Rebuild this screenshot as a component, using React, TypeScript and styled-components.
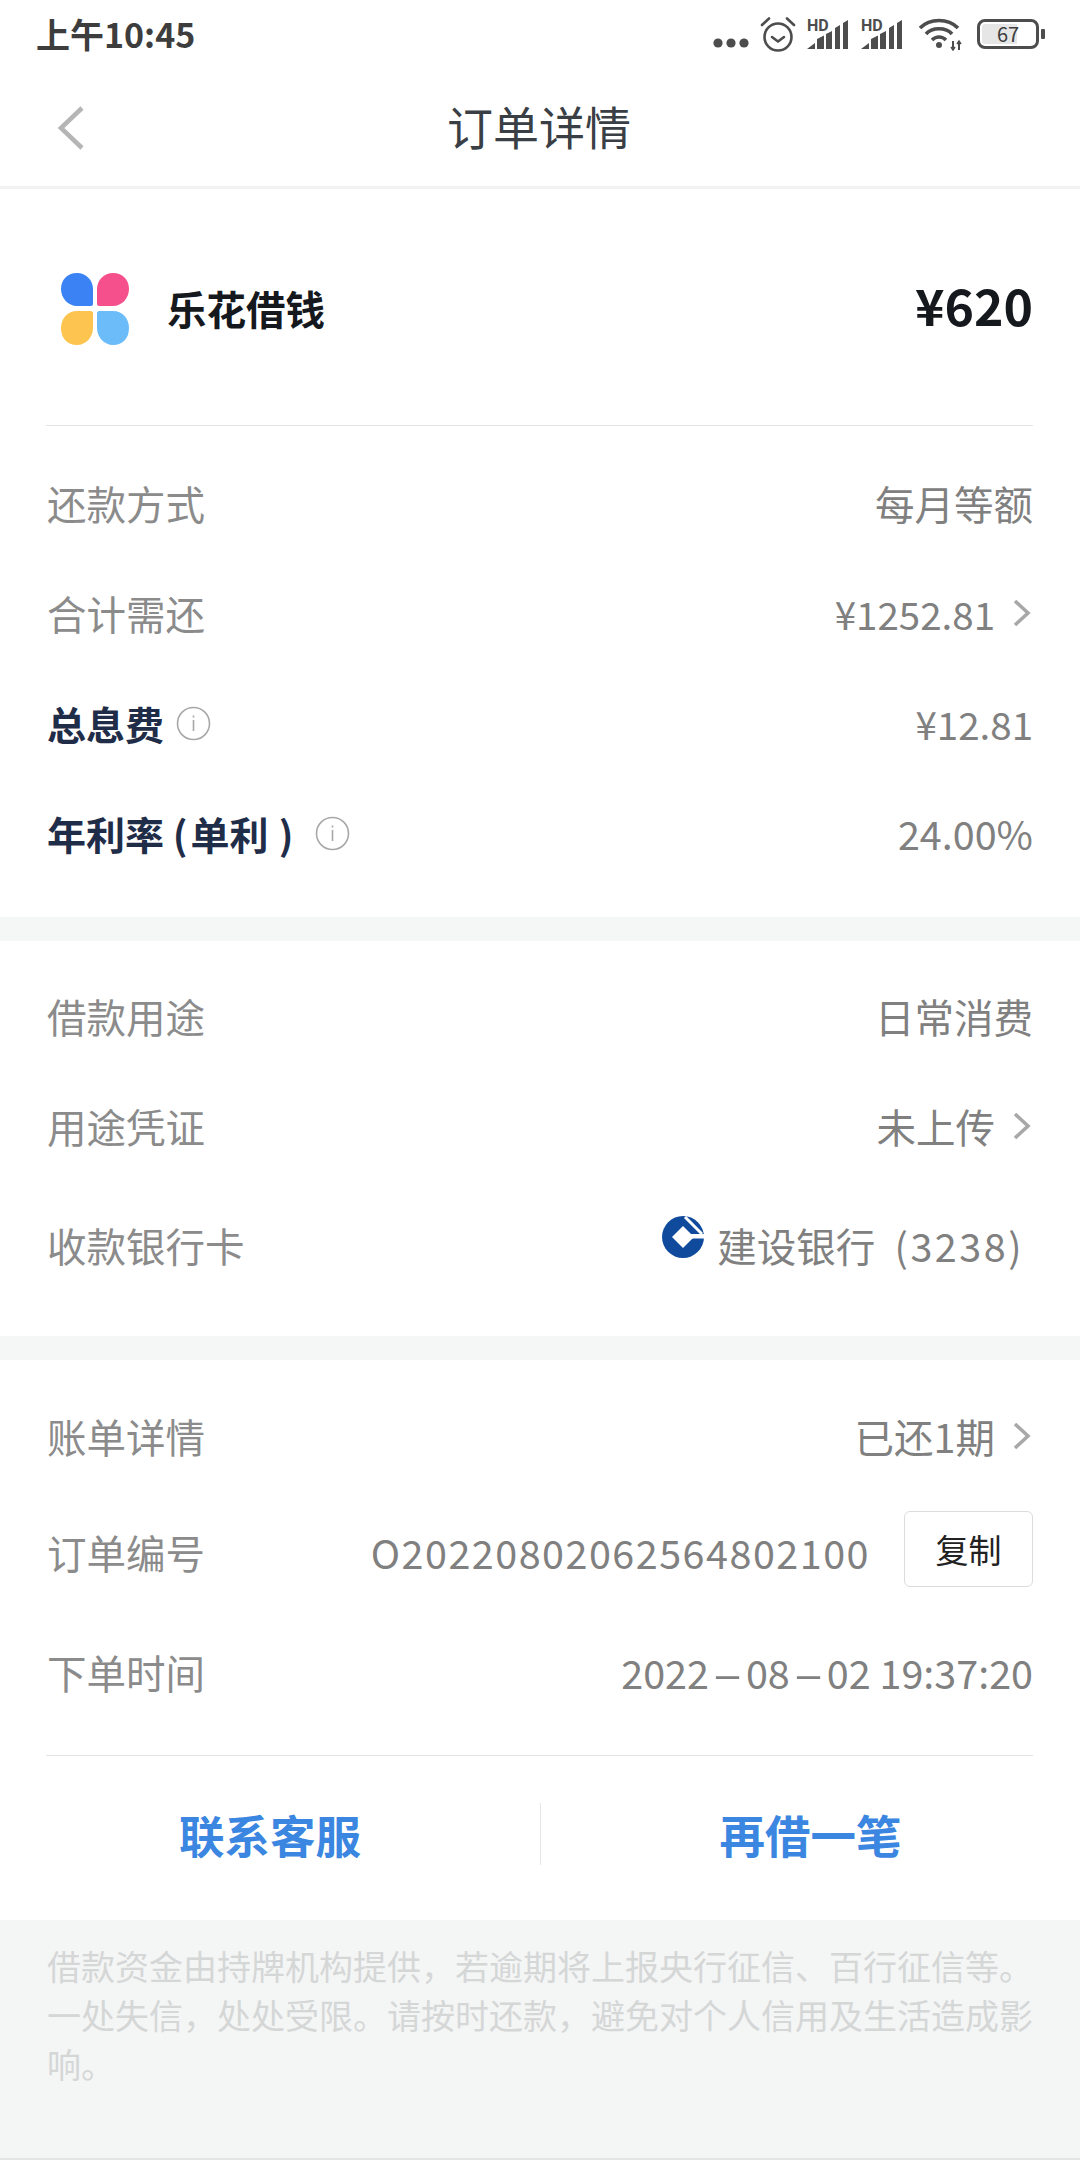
import React from 'react'
import styled, { createGlobalStyle } from 'styled-components'

const GlobalStyle = createGlobalStyle`
  html, body {
    margin: 0;
    padding: 0;
    background: #fff;
    font-family: "Noto Sans CJK SC", "Noto Sans", sans-serif;
  }
  * { box-sizing: border-box; }
`

const Page = styled.div`
  width: 1080px;
  height: 2160px;
  display: flex;
  flex-direction: column;
  background: #fff;
  overflow: hidden;
`

const StatusBar = styled.div`
  height: 68px;
  flex: none;
  display: flex;
  align-items: center;
  justify-content: space-between;
  padding: 0 35px 0 36px;
`

const Clock = styled.div`
  font-size: 34px;
  font-weight: 700;
  color: #3d3d3d;
  line-height: 1;
`

const StatusIcons = styled.div`
  display: flex;
  align-items: center;
`

const StatusSlot = styled.div<{ $left: number; $down?: number }>`
  display: flex;
  align-items: center;
  margin-left: ${({ $left }) => $left}px;
  margin-top: ${({ $down }) => $down ?? 0}px;
`

const Nav = styled.div`
  height: 121px;
  flex: none;
  display: flex;
  align-items: center;
  justify-content: center;
  position: relative;
  border-bottom: 3px solid #f2f2f2;
`

const BackIcon = styled.svg`
  position: absolute;
  left: 56px;
  top: 37px;
`

const NavTitle = styled.div`
  font-size: 46px;
  color: #3a3f46;
  line-height: 1;
  margin: -4px 2px 0 0;
`

const Section = styled.div<{ $top: number; $bottom: number }>`
  padding: ${({ $top, $bottom }) => `${$top}px 47px ${$bottom}px 47px`};
  background: #fff;
`

const Gap = styled.div`
  height: 24px;
  flex: none;
  background: #f5f6f6;
`

const ProductRow = styled.div`
  height: 237px;
  display: flex;
  align-items: center;
  justify-content: space-between;
  border-bottom: 1px solid #e4e4e4;
  margin: 0 0 26px -1px;
`

const ProductName = styled.div`
  display: flex;
  align-items: center;
  gap: 37px;
  padding-left: 14px;
  font-size: 39.5px;
  font-weight: 700;
  color: #15181d;
`

const LogoMark = styled.svg`
  margin-top: 4px;
`

const Price = styled.div`
  font-size: 50px;
  font-weight: 700;
  color: #15181d;
  padding-bottom: 6px;
`

const Row = styled.div<{ $h: number }>`
  height: ${({ $h }) => $h}px;
  padding-bottom: 8px;
  display: flex;
  align-items: center;
  justify-content: space-between;
`

const Label = styled.div<{ $strong?: boolean }>`
  display: flex;
  align-items: center;
  font-size: ${({ $strong }) => ($strong ? 39 : 39.5)}px;
  line-height: 1;
  font-weight: ${({ $strong }) => ($strong ? 700 : 400)};
  color: ${({ $strong }) => ($strong ? '#1f2d49' : '#8b8b8b')};
`

const RateNote = styled.span`
  margin: 0 10px 0 3px;
`

const InfoIcon = styled.svg<{ $gap: number }>`
  margin-left: ${({ $gap }) => $gap}px;
`

const Value = styled.div`
  display: flex;
  align-items: center;
  font-size: 39.5px;
  line-height: 1;
  color: #808080;
`

const Money = styled.span`
  font-size: 38.5px;
`

const Chevron = styled.svg`
  margin-left: 15px;
`

const BankIcon = styled.svg`
  margin: -16px 13px 0 0;
`

const BankTail = styled.span`
  letter-spacing: 2.5px;
  word-spacing: 8px;
  margin-right: 9px;
  white-space: pre;
`

const OrderNo = styled.span`
  letter-spacing: 1.5px;
`

const LongDash = styled.span`
  display: inline-block;
  width: 37px;
  text-align: center;
  transform: scaleX(2.3);
`

const CopyButton = styled.button`
  width: 129px;
  height: 76px;
  margin: 0 0 6px 34px;
  padding: 0;
  background: #fff;
  border: 1.5px solid #dcdcdc;
  border-radius: 6px;
  font-family: inherit;
  font-size: 33px;
  color: #222;
`

const ActionsRule = styled.div`
  height: 1px;
  flex: none;
  margin: 0 47px 0 46px;
  background: #e4e4e4;
`

const Actions = styled.div`
  height: 164px;
  flex: none;
  padding-bottom: 8px;
  display: grid;
  grid-template-columns: 1fr 1fr;
  align-items: center;
`

const ActionButton = styled.div<{ $divided?: boolean }>`
  height: 62px;
  display: flex;
  align-items: center;
  justify-content: center;
  font-size: 45.5px;
  font-weight: 700;
  color: #3a86e0;
  border-left: ${({ $divided }) => ($divided ? '1px solid #e6e6e6' : 'none')};
`

const Notice = styled.div`
  flex: 1;
  padding: 21px 46px 0 47px;
  background: #f4f5f5;
  font-size: 34px;
  line-height: 49px;
  color: #d5d7d7;
  border-bottom: 2px solid #e4e4e4;
`

const BatteryBox = styled.div`
  width: 62px;
  height: 30px;
  border: 3.5px solid #4d4d4d;
  border-radius: 8px;
  display: flex;
  align-items: center;
  justify-content: center;
  font-size: 20px;
  line-height: 1;
  color: #3d3d3d;
  background: linear-gradient(90deg, #e6e6e6 66%, #fff 66%);
  background-clip: content-box;
  padding: 2px;
`

const BatteryTip = styled.div`
  width: 4px;
  height: 10px;
  margin-left: 2px;
  background: #4d4d4d;
  border-radius: 1px;
`

const Dots = () => (
  <svg width="44" height="12" viewBox="0 0 44 12">
    <circle cx="5" cy="6" r="4.6" fill="#4d4d4d" />
    <circle cx="18" cy="6" r="4.6" fill="#4d4d4d" />
    <circle cx="31" cy="6" r="4.6" fill="#4d4d4d" />
  </svg>
)

const Alarm = () => (
  <svg width="36" height="36" viewBox="0 0 36 36" fill="none" stroke="#4d4d4d" strokeWidth="2.6">
    <circle cx="18" cy="21" r="13.5" />
    <path d="M12 21l6 4.500 6-4.500" strokeLinecap="round" strokeLinejoin="round" />
    <path d="M9 2.500L2 9M27 2.500L34 9" strokeLinecap="round" />
  </svg>
)

const Signal = () => (
  <svg width="41" height="39" viewBox="0 -5 41 39">
    <text x="0" y="11" fontSize="16" fontWeight="700" fontFamily="Roboto, sans-serif" fill="#4d4d4d">
      HD
    </text>
    <path d="M0 29l8-6v6zM10 29V19l7-3.500V29zM19 29V14l6-3V29zM28 29V8l5-3V29zM36 29V3l5-3V29z" fill="#4d4d4d" />
  </svg>
)

const Wifi = () => (
  <svg width="44" height="34" viewBox="0 0 44 34" fill="none" stroke="#4d4d4d" strokeWidth="3.6">
    <path d="M2 11C12 1 30 1 40 11" />
    <path d="M8 17C14 10 28 10 34 17" />
    <path d="M14 23C18 19 24 19 28 23" />
    <circle cx="21" cy="28" r="3" fill="#4d4d4d" stroke="none" />
    <path d="M35 24v9M41 24v9" strokeWidth="2" />
    <path d="M33 30l2 3 2-3M39 27l2-3 2 3" strokeWidth="1.500" />
  </svg>
)

const Petals = () => (
  <LogoMark width="70" height="74" viewBox="0 0 70 74">
    <path d="M17 1C7 1 1 8 1 17s7 17 16 17h14c1 0 2-1 2-2V17C33 8 26 1 17 1z" fill="#3b82f4" />
    <path d="M53 1c10 0 16 7 16 16s-7 17-16 17H39c-1 0-2-1-2-2V17C37 8 44 1 53 1z" fill="#f6508c" />
    <path d="M17 73C7 73 1 66 1 56s7-17 16-17h14c1 0 2 1 2 2v15c0 9-7 17-16 17z" fill="#fdc54f" />
    <path d="M53 73c10 0 16-7 16-17s-7-17-16-17H39c-1 0-2 1-2 2v15c0 9 7 17 16 17z" fill="#6cbcf9" />
  </LogoMark>
)

const Info = ({ gap }: { gap: number }) => (
  <InfoIcon $gap={gap} width="35" height="35" viewBox="0 0 35 35" fill="none" stroke="#a8a8a8">
    <circle cx="17.500" cy="17.500" r="16" strokeWidth="1.600" />
    <path d="M17.500 14v11M17.500 9.500v2" strokeWidth="1.600" />
  </InfoIcon>
)

const Arrow = () => (
  <Chevron width="23" height="30" viewBox="0 0 23 30" fill="none" stroke="#a8a8a8" strokeWidth="3.6">
    <path d="M5 3l13 12L5 27" />
  </Chevron>
)

const CcbLogo = () => (
  <BankIcon width="42" height="42" viewBox="0 0 42 42">
    <circle cx="21" cy="21" r="21" fill="#0f4a9c" />
    <path d="M21 10l11 11-11 11-11-11z" fill="#fff" />
    <path d="M28 18h14v4.500H28z" fill="#fff" />
    <path d="M23 1l17 17" stroke="#fff" strokeWidth="3" fill="none" />
  </BankIcon>
)

export default function App() {
  return (
    <Page>
      <GlobalStyle />
      <StatusBar>
        <Clock>上午10:45</Clock>
        <StatusIcons>
          <StatusSlot $left={0} $down={18}>
            <Dots />
          </StatusSlot>
          <StatusSlot $left={3}>
            <Alarm />
          </StatusSlot>
          <StatusSlot $left={11}>
            <Signal />
          </StatusSlot>
          <StatusSlot $left={13}>
            <Signal />
          </StatusSlot>
          <StatusSlot $left={16}>
            <Wifi />
          </StatusSlot>
          <StatusSlot $left={15}>
            <BatteryBox>67</BatteryBox>
            <BatteryTip />
          </StatusSlot>
        </StatusIcons>
      </StatusBar>
      <Nav>
        <BackIcon width="30" height="46" viewBox="0 0 30 46" fill="none" stroke="#b5b5b5" strokeWidth="4.500">
          <path d="M26 3L5 23l21 20" />
        </BackIcon>
        <NavTitle>订单详情</NavTitle>
      </Nav>

      <Section $top={0} $bottom={25}>
        <ProductRow>
          <ProductName>
            <Petals />
            乐花借钱
          </ProductName>
          <Price>¥620</Price>
        </ProductRow>
        <Row $h={110}>
          <Label>还款方式</Label>
          <Value>每月等额</Value>
        </Row>
        <Row $h={110}>
          <Label>合计需还</Label>
          <Value>
            <Money>¥1252.81</Money>
            <Arrow />
          </Value>
        </Row>
        <Row $h={110}>
          <Label $strong>
            总息费
            <Info gap={12} />
          </Label>
          <Value>
            <Money>¥12.81</Money>
          </Value>
        </Row>
        <Row $h={110}>
          <Label $strong>
            <span>
              年利率 (<RateNote>单利</RateNote>)
            </span>
            <Info gap={22} />
          </Label>
          <Value>24.00%</Value>
        </Row>
      </Section>
      <Gap />

      <Section $top={24} $bottom={23}>
        <Row $h={110}>
          <Label>借款用途</Label>
          <Value>日常消费</Value>
        </Row>
        <Row $h={110}>
          <Label>用途凭证</Label>
          <Value>
            未上传
            <Arrow />
          </Value>
        </Row>
        <Row $h={128}>
          <Label>收款银行卡</Label>
          <Value>
            <CcbLogo />
            建设银行
            <BankTail> (3238)</BankTail>
          </Value>
        </Row>
      </Section>
      <Gap />

      <Section $top={25} $bottom={20}>
        <Row $h={110}>
          <Label>账单详情</Label>
          <Value>
            已还1期
            <Arrow />
          </Value>
        </Row>
        <Row $h={122}>
          <Label>订单编号</Label>
          <Value>
            <OrderNo>O20220802062564802100</OrderNo>
            <CopyButton>复制</CopyButton>
          </Value>
        </Row>
        <Row $h={118}>
          <Label>下单时间</Label>
          <Value>
            2022<LongDash>-</LongDash>08<LongDash>-</LongDash>02 19:37:20
          </Value>
        </Row>
      </Section>

      <ActionsRule />
      <Actions>
        <ActionButton>联系客服</ActionButton>
        <ActionButton $divided>再借一笔</ActionButton>
      </Actions>

      <Notice>借款资金由持牌机构提供，若逾期将上报央行征信、百行征信等。一处失信，处处受限。请按时还款，避免对个人信用及生活造成影响。</Notice>
    </Page>
  )
}
